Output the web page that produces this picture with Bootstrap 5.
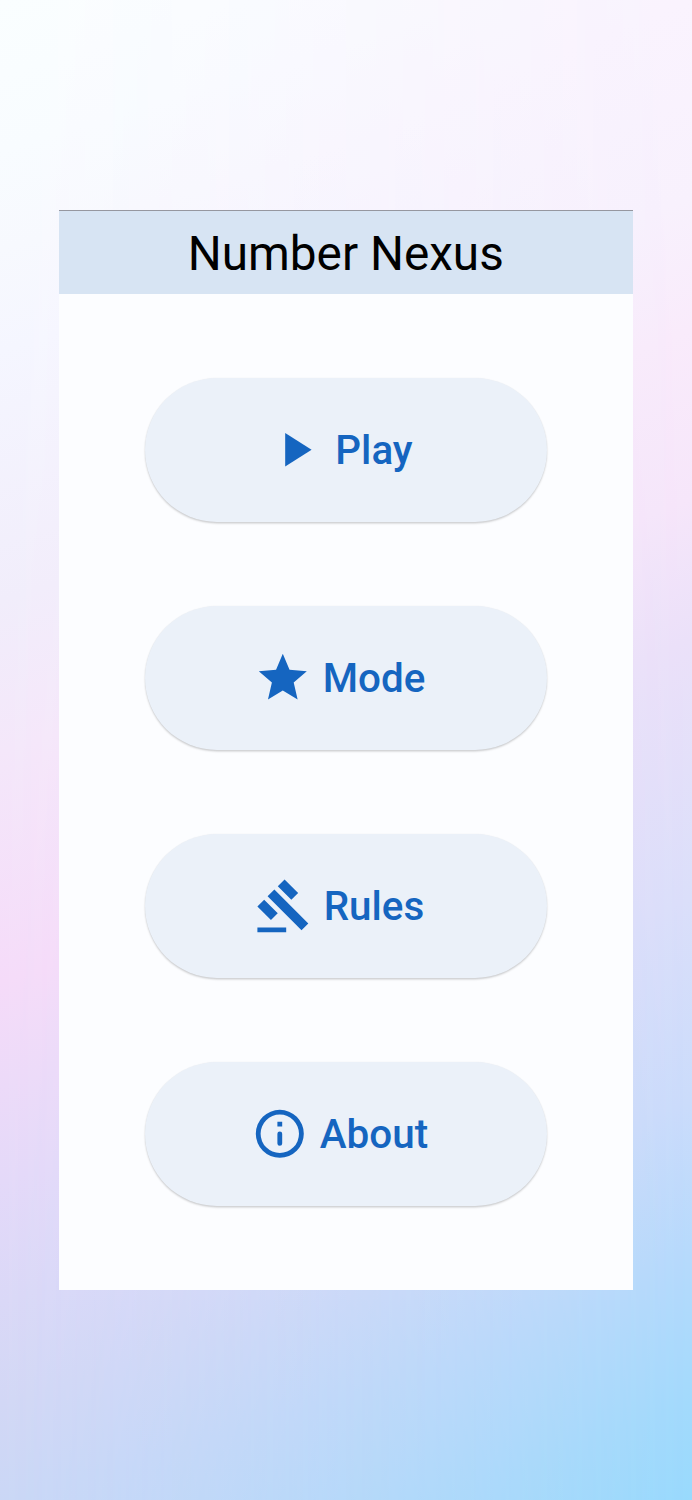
<!DOCTYPE html>
<html lang="en">
<head>
<meta charset="utf-8">
<meta name="viewport" content="width=device-width, initial-scale=1">
<title>Number Nexus</title>
<link href="https://cdn.jsdelivr.net/npm/bootstrap@5.3.0/dist/css/bootstrap.min.css" rel="stylesheet">
<style>
body{font-family:Roboto,sans-serif}
.backdrop{min-height:1500px;padding:210px 59px 0 58.5px;isolation:isolate;position:relative;background:linear-gradient(158deg,#faf9fe 0,#faf3fe 15.6%,#f8f1fd 26.8%,#f9ebfb 34.2%,#f6e6fa 43.7%,#ebe1f9 51.6%,#dbdffa 66.2%,#cbdcfb 77.5%,#b7dafc 85.9%,#a3dafc 94.4%,#99dafd 100%)}
.backdrop::before{content:"";position:absolute;inset:0;z-index:-1;background:linear-gradient(163deg,#fafeff 0,#f8fcff 8.8%,#f7f9fe 14.6%,#f5f6ff 20.5%,#f1edfb 35.1%,#f4e7fa 43.9%,#f5dbf9 57.4%,#e4d9f9 69.1%,#dad8f7 76.1%,#d2d7f5 82%,#cad7f6 87.8%,#bfd8f8 100%);-webkit-mask-image:linear-gradient(90deg,#000,transparent);mask-image:linear-gradient(90deg,#000,transparent)}
.app-screen{height:1079.5px;background:#fcfdff}
.app-title{height:84px;background:#d7e4f3;border-top:1px solid #96979f;color:#000;font-size:47.7px;line-height:84px;padding-top:1px;font-weight:400}
.menu-list{gap:84px;padding:84px 0 0 .5px}
.menu-btn{--bs-btn-color:#1565c0;--bs-btn-bg:#ebf1f9;--bs-btn-hover-bg:#e1ebf8;--bs-btn-hover-color:#1565c0;--bs-btn-active-bg:#d7e4f3;--bs-btn-active-color:#1565c0;width:402.5px;height:144px;border:0;padding:0 13px 0 0;gap:11.4px;font-size:40.4px;font-weight:500;line-height:1;box-shadow:0 1.5px 2px rgba(0,0,0,.18),0 0 1.5px rgba(0,0,0,.05)}
.menu-btn span{padding-top:2px}
.menu-btn svg{width:57.6px;height:57.6px;flex:none}
</style>
</head>
<body>
<main class="backdrop">
<section class="app-screen">
<h1 class="app-title text-center mb-0">Number Nexus</h1>
<nav class="menu-list d-flex flex-column align-items-center">
<button class="btn menu-btn rounded-pill d-flex align-items-center justify-content-center" type="button"><svg viewBox="0 0 24 24" fill="currentColor"><path d="M8 5v14l11-7z"/></svg><span>Play</span></button>
<button class="btn menu-btn rounded-pill d-flex align-items-center justify-content-center" type="button"><svg viewBox="0 0 24 24" fill="currentColor"><path d="M12 17.27 18.18 21l-1.64-7.03L22 9.24l-7.19-.61L12 2 9.19 8.63 2 9.24l5.46 4.73L5.82 21z"/></svg><span>Mode</span></button>
<button class="btn menu-btn rounded-pill d-flex align-items-center justify-content-center" type="button"><svg viewBox="0 0 24 24" fill="currentColor"><path d="M1 21h12v2H1zM5.245 8.07l2.83-2.827 14.14 14.142-2.828 2.828zM12.317 1l5.657 5.656-2.83 2.83-5.654-5.66zM3.825 9.485l5.657 5.657-2.828 2.828-5.657-5.657z"/></svg><span>Rules</span></button>
<button class="btn menu-btn rounded-pill d-flex align-items-center justify-content-center" type="button"><svg viewBox="0 0 24 24" fill="currentColor"><path d="M11 7h2v2h-2zM12 11a1 1 0 0 1 1 1v4a1 1 0 0 1-2 0v-4a1 1 0 0 1 1-1zM12 2a10 10 0 1 0 0 20 10 10 0 0 0 0-20zm0 18a8 8 0 1 1 0-16 8 8 0 0 1 0 16z"/></svg><span>About</span></button>
</nav>
</section>
</main>
<script src="https://cdn.jsdelivr.net/npm/bootstrap@5.3.0/dist/js/bootstrap.bundle.min.js"></script>
</body>
</html>
